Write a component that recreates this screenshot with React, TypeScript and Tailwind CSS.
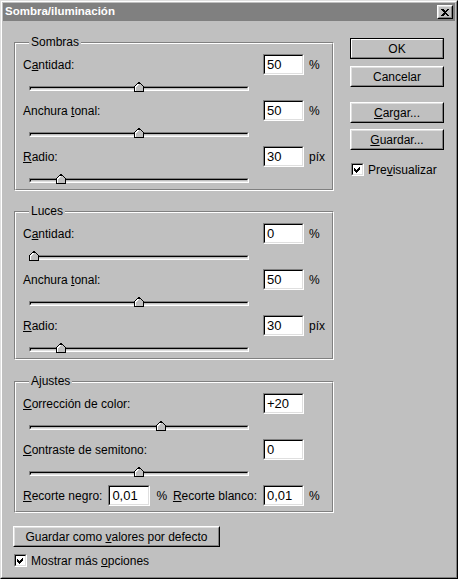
import React from "react";

function Field({ value, wide }: { value: string; wide?: boolean }) {
  return (
    <div
      className={`${wide ? "w-[42px]" : "w-[41px]"} h-[21px] shrink-0 border border-t-[#808080] border-l-[#808080] border-b-white border-r-white`}
    >
      <div className="flex h-full items-center border border-t-black border-l-black border-b-[#dfdfdf] border-r-[#dfdfdf] bg-white pl-[2px] text-[13px] leading-none text-black">
        {value}
      </div>
    </div>
  );
}

function Slider({ pos }: { pos: number }) {
  return (
    <div className="relative ml-[6px] mt-[7px] h-[10px] w-[220px]">
      <div className="absolute left-0 right-0 top-[4px] h-[5px] border border-t-[#808080] border-l-[#808080] border-b-white border-r-white">
        <div className="h-full border border-t-black border-l-black border-b-[#dfdfdf] border-r-[#dfdfdf] bg-[#c0c0c0]" />
      </div>
      <svg
        className="absolute top-0"
        style={{ left: pos }}
        width="10"
        height="10"
        viewBox="0 0 10 10"
        shapeRendering="crispEdges"
      >
        <path d="M0.5 9.5 V4.5 L5 0.5 L9.5 4.5 V9.5 Z" fill="#c0c0c0" stroke="#000" />
        <path d="M1.5 8.5 V4.9 L5 1.8" fill="none" stroke="#fff" />
      </svg>
    </div>
  );
}

function Row({ label, value, unit }: { label: React.ReactNode; value: string; unit: string }) {
  return (
    <div className="flex h-[21px] items-center text-[12px]">
      <div className="w-[240px]">{label}</div>
      <Field value={value} />
      <span className="ml-[5px]">{unit}</span>
    </div>
  );
}

function Param({ label, value, unit, pos }: { label: React.ReactNode; value: string; unit: string; pos: number }) {
  return (
    <div className="flex flex-col">
      <Row label={label} value={value} unit={unit} />
      <Slider pos={pos} />
    </div>
  );
}

function Group({ title, children, className = "" }: { title: string; children: React.ReactNode; className?: string }) {
  return (
    <div
      className={`relative w-[320px] border border-t-[#808080] border-l-[#808080] border-b-white border-r-white ${className}`}
    >
      <div className="flex flex-col gap-[8px] border border-t-white border-l-white border-b-[#808080] border-r-[#808080] pb-[5px] pl-[7px] pt-[10px]">
        {children}
      </div>
      <span className="absolute left-[14px] top-[-8px] bg-[#c0c0c0] px-[2px] text-[12px] leading-[14px]">
        {title}
      </span>
    </div>
  );
}

function Button({ children, isDefault, className = "" }: { children: React.ReactNode; isDefault?: boolean; className?: string }) {
  if (isDefault) {
    return (
      <div className={`h-[21px] border border-black ${className}`}>
        <div className="h-full border border-t-white border-l-white border-b-[#808080] border-r-[#808080]">
          <div className="flex h-full items-center justify-center text-[12px]">{children}</div>
        </div>
      </div>
    );
  }
  return (
    <div className={`h-[21px] border border-t-white border-l-white border-b-black border-r-black ${className}`}>
      <div className="flex h-full items-center justify-center border border-t-[#dfdfdf] border-l-[#dfdfdf] border-b-[#808080] border-r-[#808080] text-[12px]">
        {children}
      </div>
    </div>
  );
}

function CheckBox({ children, className = "" }: { children: React.ReactNode; className?: string }) {
  return (
    <div className={`flex h-[13px] items-center ${className}`}>
      <div className="h-[13px] w-[13px] shrink-0 border border-t-[#808080] border-l-[#808080] border-b-white border-r-white">
        <div className="flex h-full items-center justify-center border border-t-black border-l-black border-b-[#dfdfdf] border-r-[#dfdfdf] bg-white">
          <svg width="7" height="7" viewBox="0 0 7 7" shapeRendering="crispEdges">
            <path d="M0 2 L2 4 L6 0 V3 L2 7 L0 5 Z" fill="#000" />
          </svg>
        </div>
      </div>
      <span className="ml-[4px] text-[12px] leading-none">{children}</span>
    </div>
  );
}

export default function App() {
  return (
    <div className="h-[579px] w-[458px] border border-t-[#dfdfdf] border-l-[#dfdfdf] border-b-black border-r-black bg-[#c0c0c0] font-['Liberation_Sans',Arial,sans-serif] text-black">
      <div className="flex h-full flex-col border border-t-white border-l-white border-b-[#808080] border-r-[#808080] p-[1px]">
        {/* Title bar */}
        <div className="flex h-[18px] shrink-0 items-center justify-between bg-[#808080] pl-[2px] pr-[2px]">
          <span className="text-[11.5px] font-bold leading-none text-white">Sombra/iluminación</span>
          <div className="h-[14px] w-[16px] border border-t-white border-l-white border-b-black border-r-black">
            <div className="flex h-full items-center justify-center border border-t-[#dfdfdf] border-l-[#dfdfdf] border-b-[#808080] border-r-[#808080] bg-[#c0c0c0]">
              <svg width="8" height="7" viewBox="0 0 8 7" shapeRendering="crispEdges">
                <path d="M0 0 H2 L4 2 L6 0 H8 L5 3.5 L8 7 H6 L4 5 L2 7 H0 L3 3.5 Z" fill="#000" />
              </svg>
            </div>
          </div>
        </div>

        {/* Body */}
        <div className="flex pl-[11px]">
          <div className="flex w-[320px] flex-col pt-[21px]">
            <Group title="Sombras">
              <Param label={<>C<u>a</u>ntidad:</>} value="50" unit="%" pos={105} />
              <Param label={<>Anchura <u>t</u>onal:</>} value="50" unit="%" pos={105} />
              <Param label={<><u>R</u>adio:</>} value="30" unit="píx" pos={27} />
            </Group>

            <Group title="Luces" className="mt-[20px]">
              <Param label={<>C<u>a</u>ntidad:</>} value="0" unit="%" pos={0} />
              <Param label={<>Anchura <u>t</u>onal:</>} value="50" unit="%" pos={105} />
              <Param label={<><u>R</u>adio:</>} value="30" unit="píx" pos={27} />
            </Group>

            <Group title="Ajustes" className="mt-[21px]">
              <Param label={<><u>C</u>orrección de color:</>} value="+20" unit="" pos={127} />
              <Param label={<><u>C</u>ontraste de semitono:</>} value="0" unit="" pos={105} />
              <div className="flex h-[21px] items-center text-[12px]">
                <div className="flex w-[240px] items-center">
                  <span><u>R</u>ecorte negro:</span>
                  <div className="ml-[6px]">
                    <Field value="0,01" wide />
                  </div>
                  <span className="ml-[6px]">%</span>
                  <span className="ml-auto pr-[6px]"><u>R</u>ecorte blanco:</span>
                </div>
                <Field value="0,01" />
                <span className="ml-[5px]">%</span>
              </div>
            </Group>

            <Button className="-ml-[1px] mt-[13px] w-[207px]">
              <span>Guardar como <u>v</u>alores por defecto</span>
            </Button>

            <CheckBox className="mt-[7px]">
              Mostrar más <u>o</u>pciones
            </CheckBox>
          </div>

          <div className="ml-[16px] flex w-[94px] flex-col pt-[17px]">
            <Button isDefault>OK</Button>
            <Button className="mt-[7px]">Cancelar</Button>
            <Button className="mt-[15px]">
              <span><u>C</u>argar...</span>
            </Button>
            <Button className="mt-[6px]">
              <span><u>G</u>uardar...</span>
            </Button>
            <CheckBox className="ml-[1px] mt-[13px]">
              Pre<u>v</u>isualizar
            </CheckBox>
          </div>
        </div>
      </div>
    </div>
  );
}
